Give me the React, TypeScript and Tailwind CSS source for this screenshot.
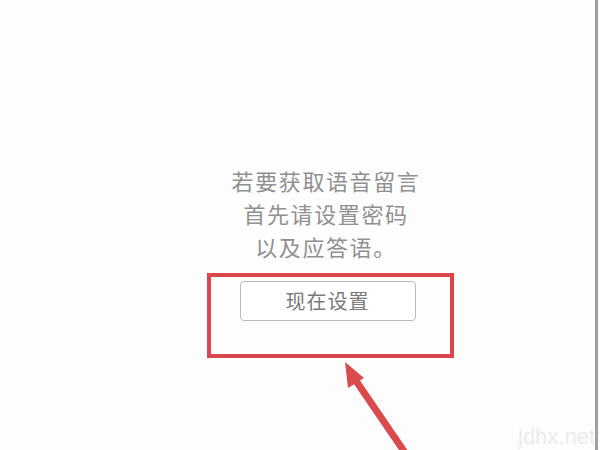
export default function App() {
  return (
    <div className="relative w-[600px] h-[450px] overflow-hidden bg-[#fdfdfd] flex font-['Noto_Sans_CJK_SC',sans-serif]">
      <div className="flex-1 flex flex-col items-center pl-[57px] pt-[164px] border-r-[3px] border-[#a0a0a0] mr-[2px]">
        <div className="flex flex-col items-center text-[22px] leading-[33px] tracking-[1.6px] text-[#909090]">
          <div>若要获取语音留言</div>
          <div>首先请设置密码</div>
          <div>以及应答语。</div>
        </div>
        <div className="mt-[10px] ml-[8px] w-[247px] h-[85px] border-4 border-[#d9474c] pt-[4px] pl-[29px]">
          <div className="w-[176px] h-[40px] rounded-[4px] border border-[#b9b9b9] flex items-center justify-center text-[20px] tracking-[1px] text-[#7a7a7a] bg-white">
            现在设置
          </div>
        </div>
      </div>
      <svg className="absolute left-0 top-0" width="600" height="450" viewBox="0 0 600 450">
        <line x1="352" y1="375" x2="410" y2="460" stroke="#db4a4c" strokeWidth="7" />
        <polygon points="345,362 364,378 348,388" fill="#db4a4c" />
      </svg>
      <div className="absolute left-[518px] top-[426px] text-[22px] leading-none text-[#ececec] font-['Liberation_Sans',sans-serif]">
        jdhx.net
      </div>
    </div>
  );
}
